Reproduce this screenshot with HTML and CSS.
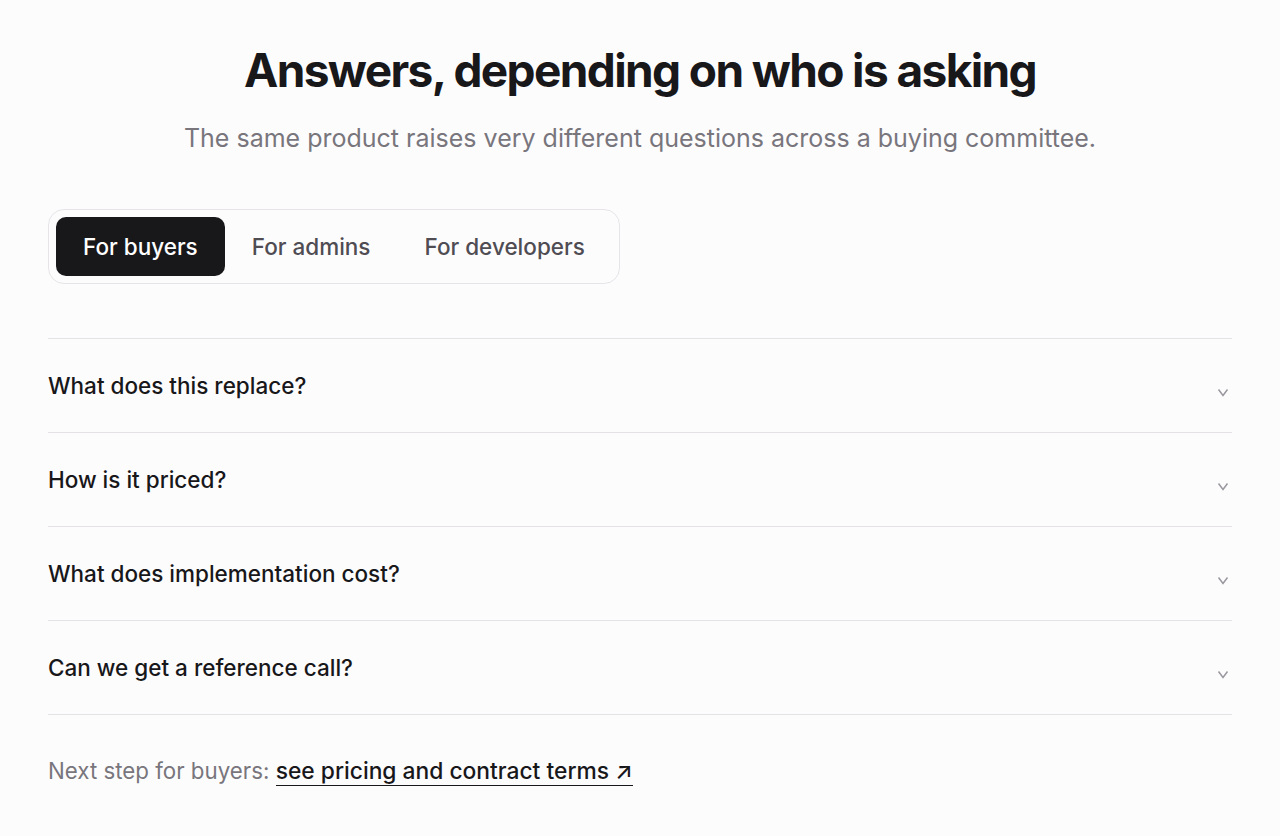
FILE: index.html
```html
<!DOCTYPE html>
<html lang="en">
<head>
<meta charset="utf-8">
<title>Answers</title>
<link rel="stylesheet" href="styles.css">
</head>
<body>
<main class="page">
  <header class="intro">
    <h1 class="title">Answers, depending on who is asking</h1>
    <p class="subtitle">The same product raises very different questions across a buying committee.</p>
  </header>
  <div class="tabs" role="tablist">
    <button class="tab tab-active" role="tab">For buyers</button>
    <button class="tab" role="tab">For admins</button>
    <button class="tab" role="tab">For developers</button>
  </div>
  <ul class="faq">
    <li class="faq-row"><span class="q">What does this replace?</span><svg class="chev" viewBox="0 0 12 9" width="12" height="9"><path d="M1.5 1.5 L6 7.5 L10.5 1.5" fill="none" stroke="currentColor" stroke-width="1.5"/></svg></li>
    <li class="faq-row"><span class="q">How is it priced?</span><svg class="chev" viewBox="0 0 12 9" width="12" height="9"><path d="M1.5 1.5 L6 7.5 L10.5 1.5" fill="none" stroke="currentColor" stroke-width="1.5"/></svg></li>
    <li class="faq-row"><span class="q">What does implementation cost?</span><svg class="chev" viewBox="0 0 12 9" width="12" height="9"><path d="M1.5 1.5 L6 7.5 L10.5 1.5" fill="none" stroke="currentColor" stroke-width="1.5"/></svg></li>
    <li class="faq-row"><span class="q">Can we get a reference call?</span><svg class="chev" viewBox="0 0 12 9" width="12" height="9"><path d="M1.5 1.5 L6 7.5 L10.5 1.5" fill="none" stroke="currentColor" stroke-width="1.5"/></svg></li>
  </ul>
  <p class="next">Next step for buyers: <a class="next-link" href="#">see pricing and contract terms ↗</a></p>
</main>
</body>
</html>
```
FILE: styles.css
```css
html, body {
  margin: 0;
  padding: 0;
  background: #fdfcfd;
}
body {
  font-family: Inter, "Noto Sans", sans-serif;
  color: #18171a;
}
.page {
  padding: 40px 48px 0;
}
.intro {
  text-align: center;
}
.title {
  margin: 0;
  font-size: 46px;
  font-weight: 700;
  letter-spacing: -0.035em;
  line-height: 60px;
  color: #18171a;
}
.subtitle {
  margin: 23px 0 0;
  font-size: 25px;
  line-height: 30px;
  color: #78767c;
  font-weight: 400;
}
.tabs {
  display: inline-flex;
  margin-top: 56px;
  padding: 7px;
  border: 1px solid #e6e4e8;
  border-radius: 16px;
}
.tab {
  font-family: inherit;
  font-size: 22.5px;
  font-weight: 500;
  color: #4f4d53;
  background: transparent;
  border: 0;
  padding: 0 27px;
  height: 59px;
  border-radius: 10px;
  cursor: pointer;
}
.tab-active {
  background: #18171a;
  color: #ffffff;
}
.faq {
  list-style: none;
  margin: 54px 0 0;
  padding: 0;
  border-top: 1px solid #e4e2e6;
}
.faq-row {
  display: flex;
  align-items: center;
  justify-content: space-between;
  height: 93px;
  border-bottom: 1px solid #e4e2e6;
}
.q {
  font-size: 22.5px;
  font-weight: 500;
  color: #18171a;
}
.chev {
  color: #9a989e;
  margin-right: 3px;
  margin-top: 14px;
}
.next {
  margin: 42px 0 0;
  font-size: 22.3px;
  line-height: 28px;
  color: #78767c;
}
.next-link {
  display: inline-block;
  color: #18171a;
  font-weight: 500;
  font-size: 22.8px;
  line-height: 28px;
  text-decoration: none;
  border-bottom: 1.5px solid #18171a;
}
```
